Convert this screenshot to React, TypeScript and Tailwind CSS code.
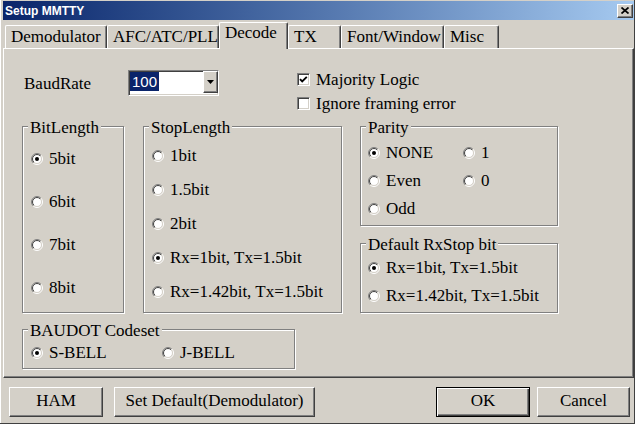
import React from "react";
import clsx from "clsx";

const raised =
  "border border-t-white border-l-white border-b-[#404040] border-r-[#404040] shadow-[inset_-1px_-1px_0_#808080]";
const sunken =
  "border border-t-[#808080] border-l-[#808080] border-b-white border-r-white shadow-[inset_1px_1px_0_#404040,inset_-1px_-1px_0_#d4d0c8]";

const Radio = ({ on }: { on?: boolean }) => (
  <svg width="12" height="12" viewBox="0 0 12 12" className="shrink-0">
    <defs>
      <linearGradient id="ro" x1="0" y1="0" x2="1" y2="1">
        <stop offset="0.5" stopColor="#808080" />
        <stop offset="0.5" stopColor="#ffffff" />
      </linearGradient>
      <linearGradient id="ri" x1="0" y1="0" x2="1" y2="1">
        <stop offset="0.5" stopColor="#404040" />
        <stop offset="0.5" stopColor="#d4d0c8" />
      </linearGradient>
    </defs>
    <circle cx="6" cy="6" r="5.5" fill="none" stroke="url(#ro)" />
    <circle cx="6" cy="6" r="4.5" fill="#fff" stroke="url(#ri)" />
    {on && <circle cx="6" cy="6" r="2" fill="#000" />}
  </svg>
);

const Option = ({
  label,
  on,
  className,
}: {
  label: string;
  on?: boolean;
  className?: string;
}) => (
  <div className={clsx("flex items-center h-[19px] whitespace-nowrap", className)}>
    <Radio on={on} />
    <span className="ml-[6px]">{label}</span>
  </div>
);

const Check = ({ label, on }: { label: string; on?: boolean }) => (
  <div className="flex items-center h-[19px] whitespace-nowrap">
    <div className={clsx("w-[13px] h-[13px] bg-white shrink-0 flex items-center justify-center", sunken)}>
      {on && (
        <svg width="9" height="9" viewBox="0 0 9 9">
          <path d="M1 4.2 L3.2 6.4 L7.8 1.8" stroke="#000" strokeWidth="1.9" fill="none" />
        </svg>
      )}
    </div>
    <span className="ml-[6px]">{label}</span>
  </div>
);

const Group = ({
  title,
  className,
  children,
}: {
  title: string;
  className?: string;
  children?: React.ReactNode;
}) => (
  <div
    className={clsx(
      "relative shrink-0 border border-[#808080] shadow-[inset_1px_1px_0_#fff,1px_1px_0_#fff]",
      className
    )}
  >
    <span className="absolute left-[5px] -top-[9px] px-[2px] bg-[#d4d0c8] whitespace-nowrap">
      {title}
    </span>
    {children}
  </div>
);

const Tab = ({ label, w, active }: { label: string; w: string; active?: boolean }) => (
  <div
    className={clsx(
      "shrink-0 bg-[#d4d0c8] border-l border-t border-r border-l-white border-t-white border-r-[#404040] rounded-t-[2px] shadow-[inset_-1px_0_0_#808080] pl-[5px] whitespace-nowrap",
      w,
      active ? "h-[27px] -mb-px relative z-10 pt-0" : "h-[23px] pt-px"
    )}
  >
    {label}
  </div>
);

const Button = ({ label, className, def }: { label: string; className: string; def?: boolean }) => (
  <div
    className={clsx(
      "h-[30px] flex items-center justify-center pb-[3px] shrink-0",
      def
        ? "border border-black shadow-[inset_1px_1px_0_#fff,inset_-1px_-1px_0_#404040,inset_-2px_-2px_0_#808080]"
        : raised,
      className
    )}
  >
    {label}
  </div>
);

export default function App() {
  return (
    <div className="w-[635px] h-[424px] overflow-hidden bg-[#d4d0c8] text-black font-['Liberation_Serif',serif] text-[17px] leading-[19px] flex flex-col pl-[3px] pt-px shadow-[inset_-1px_-1px_0_#404040,inset_1px_0_0_#fff]">
      {/* title bar */}
      <div className="h-[19px] w-[631px] flex items-center justify-between pl-[2px] pr-px bg-linear-to-r from-[#0a246a] to-[#a6caf0]">
        <span className="text-white font-bold text-[12px] leading-[14px] font-['Liberation_Sans',sans-serif]">
          Setup MMTTY
        </span>
        <div className={clsx("w-[16px] h-[14px] bg-[#d4d0c8] flex items-center justify-center", raised)}>
          <svg width="8" height="7" viewBox="0 0 8 7">
            <path d="M0.5 0.5 L7.5 6.5 M7.5 0.5 L0.5 6.5" stroke="#000" strokeWidth="1.7" />
          </svg>
        </div>
      </div>

      {/* tabs */}
      <div className="flex items-end h-[28px] pl-[2px]">
        <Tab label="Demodulator" w="w-[102px]" />
        <Tab label="AFC/ATC/PLL" w="w-[112px]" />
        <Tab label="Decode" w="w-[69px]" active />
        <Tab label="TX" w="w-[53px]" />
        <Tab label="Font/Window" w="w-[103px]" />
        <Tab label="Misc" w="w-[55px]" />
      </div>

      {/* panel */}
      <div className="relative h-[330px] w-[631px] border border-t-white border-l-white border-b-[#404040] border-r-[#404040] shadow-[inset_-1px_-1px_0_#808080] flex flex-col pl-[18px]">
        <div className="flex items-start mt-[21px]">
          <div className="w-[106px] h-[26px] pl-[2px] flex items-center">BaudRate</div>
          <div className={clsx("w-[91px] h-[26px] bg-white flex items-start justify-between", sunken)}>
            <span className="mt-px ml-px h-[19px] px-[2px] bg-[#0a246a] text-white font-['Liberation_Sans',sans-serif] text-[15px] leading-[19px]">
              100
            </span>
            <div className={clsx("w-[15px] h-[22px] bg-[#d4d0c8] flex items-center justify-center", raised)}>
              <svg width="7" height="4" viewBox="0 0 7 4">
                <path d="M0 0 H7 L3.5 4 Z" fill="#000" />
              </svg>
            </div>
          </div>
          <div className="ml-[78px] flex flex-col gap-[5px]">
            <Check label="Majority Logic" on />
            <Check label="Ignore framing error" />
          </div>
        </div>

        <div className="flex items-start mt-[13px]">
          <Group title="BitLength" className="w-[102px] h-[187px]">
            <div className="flex flex-col pt-[22px] pl-[8px] gap-[24px]">
              <Option label="5bit" on />
              <Option label="6bit" />
              <Option label="7bit" />
              <Option label="8bit" />
            </div>
          </Group>
          <Group title="StopLength" className="ml-[19px] w-[199px] h-[187px]">
            <div className="flex flex-col pt-[19px] pl-[8px] gap-[15px]">
              <Option label="1bit" />
              <Option label="1.5bit" />
              <Option label="2bit" />
              <Option label="Rx=1bit, Tx=1.5bit" on />
              <Option label="Rx=1.42bit, Tx=1.5bit" />
            </div>
          </Group>
          <div className="ml-[18px] flex flex-col">
            <Group title="Parity" className="w-[198px] h-[100px]">
              <div className="grid grid-cols-[95px_auto] pt-[16px] pl-[7px] gap-y-[9px]">
                <Option label="NONE" on />
                <Option label="1" />
                <Option label="Even" />
                <Option label="0" />
                <Option label="Odd" />
              </div>
            </Group>
            <Group title="Default RxStop bit" className="mt-[17px] w-[198px] h-[70px]">
              <div className="flex flex-col pt-[14px] pl-[7px] gap-[9px]">
                <Option label="Rx=1bit, Tx=1.5bit" on />
                <Option label="Rx=1.42bit, Tx=1.5bit" />
              </div>
            </Group>
          </div>
        </div>

        <Group title="BAUDOT Codeset" className="mt-[16px] w-[273px] h-[40px]">
          <div className="flex pt-[13px] pl-[8px]">
            <Option label="S-BELL" on className="w-[131px]" />
            <Option label="J-BELL" />
          </div>
        </Group>
      </div>

      {/* buttons */}
      <div className="flex mt-[9px]">
        <Button label="HAM" className="ml-[6px] w-[94px]" />
        <Button label="Set Default(Demodulator)" className="ml-[11px] w-[201px]" />
        <Button label="OK" className="ml-[121px] w-[94px]" def />
        <Button label="Cancel" className="ml-[7px] w-[93px]" />
      </div>
    </div>
  );
}
